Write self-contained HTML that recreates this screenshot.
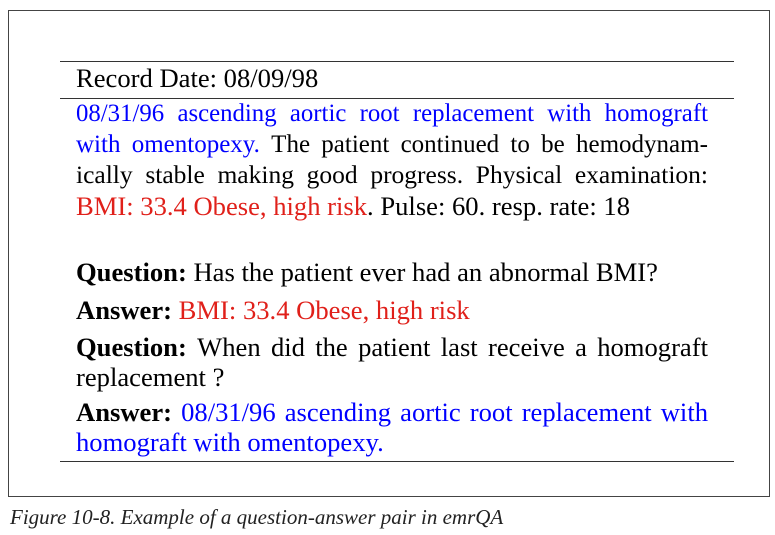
<!DOCTYPE html>
<html><head><meta charset="utf-8"><style>
body{margin:0;width:775px;height:535px;background:#fff;position:relative;overflow:hidden;font-family:"Liberation Serif",serif;}
.box{position:absolute;left:8px;top:10px;width:760px;height:485px;border:1px solid #444;}
.hr{position:absolute;left:60px;width:674px;height:0;border-top:1.5px solid #333;}
.l{position:absolute;left:76px;width:632px;font-size:26.6px;line-height:26px;white-space:nowrap;color:#000;}
.f{display:flex;justify-content:space-between;}
.b{color:#0000ff}.r{color:#e0201a}
strong{font-weight:bold}
.cap{position:absolute;left:10px;top:505px;font-style:italic;font-size:21px;line-height:24px;color:#222;}
</style></head><body>
<div class="box"></div>
<div class="hr" style="top:61px"></div>
<div class="hr" style="top:98px"></div>
<div class="hr" style="top:461px"></div>
<div class="l" style="top:65px">Record Date: 08/09/98</div>
<div class="l f b" style="top:101px;font-size:24.8px"><span>08/31/96</span><span>ascending</span><span>aortic</span><span>root</span><span>replacement</span><span>with</span><span>homograft</span></div>
<div class="l f" style="top:132px;font-size:25px"><span class="b">with</span><span class="b">omentopexy.</span><span>The</span><span>patient</span><span>continued</span><span>to</span><span>be</span><span>hemodynam-</span></div>
<div class="l f" style="top:162px;font-size:25.5px"><span>ically</span><span>stable</span><span>making</span><span>good</span><span>progress.</span><span>Physical</span><span>examination:</span></div>
<div class="l" style="top:193px"><span class="r">BMI: 33.4 Obese, high risk</span>. Pulse: 60. resp. rate: 18</div>
<div class="l" style="top:259px"><strong>Question:</strong> Has the patient ever had an abnormal BMI?</div>
<div class="l" style="top:297px"><strong>Answer:</strong> <span class="r">BMI: 33.4 Obese, high risk</span></div>
<div class="l f" style="top:334px"><strong>Question:</strong><span>When</span><span>did</span><span>the</span><span>patient</span><span>last</span><span>receive</span><span>a</span><span>homograft</span></div>
<div class="l" style="top:364px">replacement ?</div>
<div class="l f" style="top:399px"><strong>Answer:</strong><span class="b">08/31/96</span><span class="b">ascending</span><span class="b">aortic</span><span class="b">root</span><span class="b">replacement</span><span class="b">with</span></div>
<div class="l b" style="top:429px">homograft with omentopexy.</div>
<div class="cap">Figure 10-8. Example of a question-answer pair in emrQA</div>
</body></html>
